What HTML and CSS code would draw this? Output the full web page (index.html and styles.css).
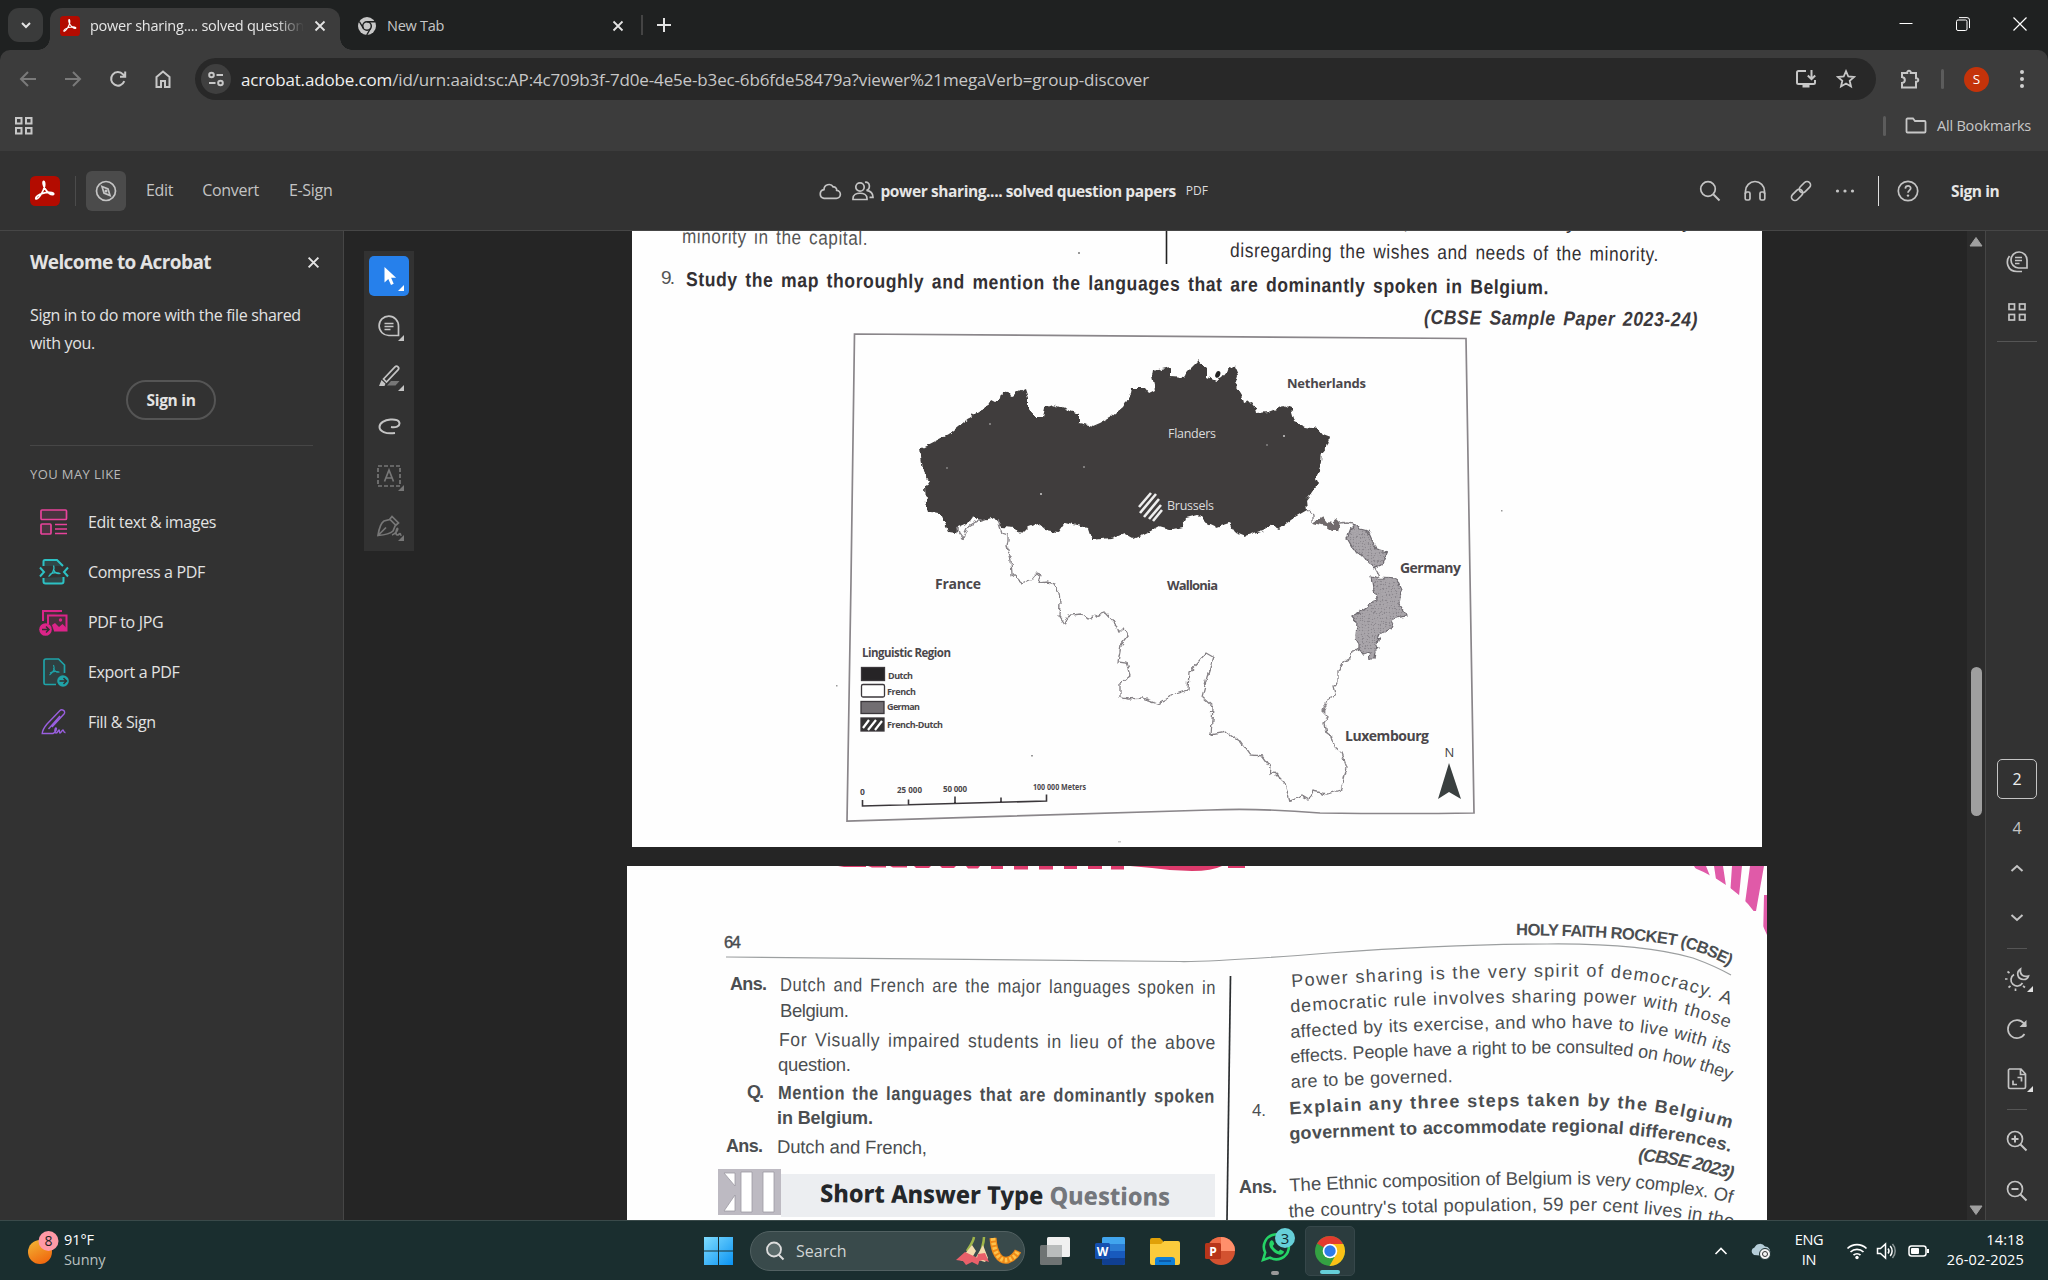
FILE: index.html
```html
<!DOCTYPE html>
<html lang="en">
<head>
<meta charset="utf-8">
<title>power sharing.... solved question papers</title>
<link rel="stylesheet" href="styles.css">
</head>
<body>
<svg class="defs" width="0" height="0" aria-hidden="true">
  <defs>
    <symbol id="acro" viewBox="0 0 20 20"><rect width="20" height="20" rx="3.6" fill="#b30b00"/><path d="M4.3 15.3c1.6-.4 4.8-4.900 5.400-8.500.3-2-.1-3.300-.6-3.200-.8.200-.3 3.200 1.300 5.400 1.600 2.200 3.600 3.600 4.900 3.400 1.200-.3.300-1.600-2.600-1.500-2.700.1-5.900 1-7.600 2.200-1.400 1-1.600 2.400-.8 2.200z" fill="none" stroke="#fff" stroke-width="1.150"/></symbol>
    <symbol id="corner" viewBox="0 0 6 6"><path d="M6 0v6H0z" fill="currentColor"/></symbol>
    <symbol id="x" viewBox="0 0 12 12"><path d="M1.500 1.500l9 9M10.500 1.500l-9 9" stroke="currentColor" stroke-width="1.800" fill="none"/></symbol>
  </defs>
</svg>

<header class="tabstrip">
  <button class="tab-search"><svg width="12" height="12" viewBox="0 0 12 12"><path d="M2 4l4 4 4-4" class="s2"/></svg></button>
  <div class="tab active">
    <svg width="20" height="20"><use href="#acro"/></svg>
    <span class="tab-title fade">power sharing.... solved question</span>
    <svg class="tab-x" width="12" height="12"><use href="#x"/></svg>
  </div>
  <div class="tab second">
    <svg width="18" height="18" viewBox="0 0 18 18"><circle cx="9" cy="9" r="9" fill="#c7c7c7"/><circle cx="9" cy="9" r="4.300" fill="none" stroke="#1f2121" stroke-width="1.500"/><path d="M9 4.700h8M5.300 11.200L1.300 4.500M12.700 11.200L8.700 18" stroke="#1f2121" stroke-width="1.400"/></svg>
    <span class="tab-title">New Tab</span>
    <svg class="tab-x" width="12" height="12"><use href="#x"/></svg>
  </div>
  <span class="tab-sep"></span>
  <svg class="newtab" width="14" height="14" viewBox="0 0 14 14"><path d="M7 0v14M0 7h14" class="s2"/></svg>
  <div class="window-buttons">
    <svg width="14" height="14" viewBox="0 0 14 14"><path d="M.5 6.500h13" stroke="#fff"/></svg>
    <svg width="14" height="14" viewBox="0 0 14 14" fill="none" stroke="#fff"><rect x=".5" y="3" width="10.500" height="10.500" rx="1.500"/><path d="M3 .6h8a2.500 2.500 0 0 1 2.500 2.500v8"/></svg>
    <svg width="14" height="14" viewBox="0 0 14 14"><path d="M.5.5l13 13M13.500.5l-13 13" stroke="#fff" stroke-width="1.200"/></svg>
  </div>
</header>

<div class="toolbar">
  <div class="nav">
    <svg class="dim" width="20" height="20" viewBox="0 0 20 20"><path d="M18 10H3M10 3l-7 7 7 7" class="s2"/></svg>
    <svg class="dim" width="20" height="20" viewBox="0 0 20 20"><path d="M2 10h15M10 3l7 7-7 7" class="s2"/></svg>
    <svg width="20" height="20" viewBox="0 0 20 20"><path d="M16.300 12.200A6.800 6.800 0 1 1 15 5.300l2 2M17.200 2.500v5.200H12" class="s2"/></svg>
    <svg width="20" height="20" viewBox="0 0 20 20"><path d="M3.500 8L10 2.500 16.500 8v10H12v-6H8v6H3.500z" class="s2"/></svg>
  </div>
  <div class="omnibox">
    <span class="site"><svg width="18" height="18" viewBox="0 0 18 18"><g class="s2"><circle cx="4.500" cy="5" r="2.300"/><path d="M9.500 5H16M2 13h6.500"/><circle cx="13.500" cy="13" r="2.300"/></g></svg></span>
    <span class="url"><b>acrobat.adobe.com</b>/id/urn:aaid:sc:AP:4c709b3f-7d0e-4e5e-b3ec-6b6fde58479a?viewer%21megaVerb=group-discover</span>
    <svg width="22" height="20" viewBox="0 0 22 20"><path d="M11 2H3.500A1.500 1.500 0 0 0 2 3.500v10A1.500 1.500 0 0 0 3.500 15h15a1.500 1.500 0 0 0 1.500-1.500V11M16.500 1v9M12.800 6.500l3.700 3.700 3.700-3.700" class="s2"/><path d="M7.500 15h7v3.500h-7z" fill="currentColor"/></svg>
    <svg class="star" width="20" height="20" viewBox="0 0 20 20"><path d="M10 2.200l2.300 5.300 5.800.5-4.400 3.800 1.300 5.700L10 14.500l-5 3 1.300-5.700L1.900 8l5.800-.5z" class="s2 thin"/></svg>
  </div>
  <svg class="ext" width="22" height="22" viewBox="0 0 22 22"><path d="M3 5h5.200c-.4-3 4-3 3.600 0H17v5.200c3-.4 3 4 0 3.600V19.500H3v-4.500c3.800-.5 3.800-5.500 0-6z" class="s2"/></svg>
  <span class="bar-sep"></span>
  <span class="avatar">S</span>
  <svg class="kebab" width="6" height="20" viewBox="0 0 6 20"><g fill="#d0d0d0"><circle cx="3" cy="3" r="2"/><circle cx="3" cy="10" r="2"/><circle cx="3" cy="17" r="2"/></g></svg>
</div>

<div class="bookmarks">
  <svg width="20" height="20" viewBox="0 0 20 20"><g class="s2"><rect x="2" y="2" width="5.500" height="5.500"/><rect x="12" y="2" width="5.500" height="5.500"/><rect x="2" y="12" width="5.500" height="5.500"/><rect x="12" y="12" width="5.500" height="5.500"/></g></svg>
  <span class="grow"></span>
  <span class="bar-sep"></span>
  <svg width="22" height="17" viewBox="0 0 22 17"><path d="M1.500 2.500a1 1 0 0 1 1-1H8l2 2.500h9.500a1 1 0 0 1 1 1v9.500a1 1 0 0 1-1 1h-17a1 1 0 0 1-1-1z" class="s2 thin"/></svg>
  <span class="all-bm">All Bookmarks</span>
</div>

<div class="acro-head">
  <svg width="30" height="30"><use href="#acro"/></svg>
  <span class="head-sep"></span>
  <span class="compass"><svg width="22" height="22" viewBox="0 0 22 22"><circle cx="11" cy="11" r="9.500" class="s1"/><path d="M7 6.500l6 2.500 2 6.500-6-2.500z" class="s1"/><circle cx="11" cy="11" r="1.500" fill="currentColor"/></svg></span>
  <nav><span>Edit</span><span>Convert</span><span>E-Sign</span></nav>
  <div class="doc-title">
    <svg width="24" height="20" viewBox="0 0 24 20"><path d="M6 17.300h12a4 4 0 0 0 .7-8 3 3 0 0 0-3.400-3.300 5 5 0 0 0-9.300 2.600A4.400 4.400 0 0 0 6 17.300z" class="s1"/></svg>
    <svg class="people" width="24" height="24" viewBox="0 0 24 24"><g class="s1"><circle cx="9" cy="8" r="4.200"/><path d="M2 20.500v-1c0-7 14-7 14 0v1zM14 3.300c5-1 6 6.500 1.500 8 4 .5 6.500 3 6.500 7H18.500"/></g></svg>
    <b>power sharing.... solved question papers</b><small>PDF</small>
  </div>
  <div class="head-right">
    <svg width="22" height="22" viewBox="0 0 22 22"><circle cx="9" cy="9" r="7.300" class="s1"/><path d="M14.500 14.500l6 6" class="s1 thick"/></svg>
    <svg width="24" height="22" viewBox="0 0 24 22"><g class="s1"><path d="M2.500 14V11a9.500 9.500 0 0 1 19 0v3"/><rect x="2.200" y="12" width="4.800" height="8" rx="1.500"/><rect x="17" y="12" width="4.800" height="8" rx="1.500"/></g></svg>
    <svg width="24" height="24" viewBox="0 0 24 24"><g class="s1" transform="rotate(-45 12 12)"><rect x="0" y="8.500" width="13" height="7" rx="3.500"/><rect x="11" y="8.500" width="13" height="7" rx="3.500"/></g></svg>
    <svg width="20" height="20" viewBox="0 0 20 20"><g fill="#c4c4c4"><circle cx="2.500" cy="10" r="1.600"/><circle cx="10" cy="10" r="1.600"/><circle cx="17.500" cy="10" r="1.600"/></g></svg>
    <i></i>
    <svg width="22" height="22" viewBox="0 0 22 22"><circle cx="11" cy="11" r="9.700" class="s1"/><path d="M8.300 8.600c.2-3.600 5.600-3.400 5.400-.2-.1 1.900-2.700 2-2.700 4.300" class="s1"/><circle cx="11" cy="15.600" r="1.200" fill="currentColor"/></svg>
    <b>Sign in</b>
  </div>
</div>

<main>
  <aside class="welcome">
    <h2>Welcome to Acrobat<svg width="13" height="13"><use href="#x"/></svg></h2>
    <p>Sign in to do more with the file shared with you.</p>
    <button class="signin">Sign in</button>
    <hr>
    <h3>YOU MAY LIKE</h3>
    <ul>
      <li><svg width="30" height="30" viewBox="0 0 30 30"><g fill="#e34399" fill-opacity=".13" stroke="#e8439b" stroke-width="1.700"><rect x="2" y="3" width="25.500" height="9.500" rx="1"/><rect x="2" y="17" width="10" height="10" rx="1"/></g><path d="M16 17.500h12M16 22h12M16 26.500h12" stroke="#e8439b" stroke-width="1.700"/></svg><span>Edit text &amp; images</span></li>
      <li><svg width="30" height="30" viewBox="0 0 30 30"><path d="M4.500 9V4.500a1.500 1.500 0 0 1 1.500-1.500h12l6 6M24.500 20v4.500a2 2 0 0 1-2 2H6.500a2 2 0 0 1-2-2V21" fill="#2dbdc0" fill-opacity=".16" stroke="#2dc1c4" stroke-width="2"/><path d="M1 10.500L5 15l-4 4.500M29 10.500L25 15l4 4.500" fill="none" stroke="#2dc1c4" stroke-width="2"/><path d="M14.500 8.500c2 4-2 9-5 11M14.500 12c1 4 4 5 7 4.500M10.500 17.500c3-2 6-2.500 10-1.500" fill="none" stroke="#2dc1c4" stroke-width="1.200"/></svg><span>Compress a PDF</span></li>
      <li><svg width="30" height="30" viewBox="0 0 30 30"><path d="M4 14V4h19M9 17V8.500h18.500v15H15" fill="#d6247f" fill-opacity=".13" stroke="#dc2489" stroke-width="2"/><circle cx="21.500" cy="13" r="1.700" fill="#dc2489"/><path d="M13 18l3-2 4 4 3.500-3 4 4v3H15z" fill="#dc2489"/><circle cx="6.500" cy="22.500" r="6.300" fill="#dc2489"/><path d="M3 22.500h6.500M7 19.500l3 3-3 3" fill="none" stroke="#323232" stroke-width="1.500"/></svg><span>PDF to JPG</span></li>
      <li><svg width="30" height="30" viewBox="0 0 30 30"><path d="M17 27.500H6.500a1.500 1.500 0 0 1-1.500-1.500V4a2 2 0 0 1 2-2h12.500l6 6v8" fill="#1fa3a8" fill-opacity=".13" stroke="#1fa3a8" stroke-width="1.700"/><path d="M14.500 8c2 4-1 8-4 10M14.500 11c1 3 3 5 6 4M11 16c3-2 6-2 9-1" fill="none" stroke="#1fa3a8" stroke-width="1.200"/><circle cx="24" cy="24" r="5.800" fill="#1fa3a8"/><path d="M20.500 24h6.500M24.500 21l3 3-3 3" fill="none" stroke="#323232" stroke-width="1.500"/></svg><span>Export a PDF</span></li>
      <li><svg width="30" height="30" viewBox="0 0 30 30"><path d="M8 17L21 3.500c2-2 6 .7 4.200 3.200L13 20M8 17c-2.500 3-4.500 6-4.800 9.500H14c3-1 4-5 3-5.500s-2 5 0 5 2-3 3-3 0 3 1 3 2-3 3-3 0 3 2.500 2.500M9.500 22L21 9" fill="none" stroke="#9a5fe0" stroke-width="1.400"/></svg><span>Fill &amp; Sign</span></li>
    </ul>
  </aside>

  <section class="viewer">
    <div class="tools">
      <span class="on"><svg width="24" height="24" viewBox="0 0 24 24"><path d="M7.500 3v15.500l3.800-3.600 2.700 6 2.700-1.200-2.600-5.900h5z" fill="#fff"/></svg><svg class="c"><use href="#corner"/></svg></span>
      <span><svg width="24" height="24" viewBox="0 0 24 24"><path d="M21.500 21.500H12A9.700 9.700 0 1 1 21.500 12zM7.500 9.500h9M7.500 12.500h9M7.500 15.500h6" class="s1"/></svg><svg class="c"><use href="#corner"/></svg></span>
      <span><svg width="24" height="24" viewBox="0 0 24 24"><path d="M6.500 15L18 2.800a2 2 0 0 1 3 3L9.500 18z" class="s1"/><path d="M2 22l2.500-6 4 3.800L7.500 22z" fill="#c4c4c4"/><path d="M10 21.500l4-4.500h8.500l-4 4.500z" fill="#777"/></svg><svg class="c"><use href="#corner"/></svg></span>
      <span><svg width="24" height="24" viewBox="0 0 24 24"><path d="M14 13c5 1 8.500-1 8.500-3.500 0-3-4-4.500-9-4-6 .5-11 3.500-11 7.500s6 7.500 15.500 6" class="s1 thick"/></svg></span>
      <span class="off"><svg width="26" height="24" viewBox="0 0 26 24"><rect x="2" y="2" width="22" height="20" class="s1" stroke-dasharray="4 2"/><path d="M8.500 17.500L13 6l4.500 11.500M10 14h6" class="s1"/></svg><svg class="c"><use href="#corner"/></svg></span>
      <span class="off"><svg width="26" height="24" viewBox="0 0 26 24"><path d="M2 21.500C3 15 4.500 9 8 7l6-1.500 5.500 5.500-2.500 6c-3 3-9 4-15 4.500zM2 21.500l8-8M13.500 5.500L16 2.500l6.500 6.500-3 2.500M16 21c4-1 6.500-6 5.500-6.500s-2.500 6.500-.5 6.500 2-1.500 3-1.500 0 2 1.500 1.500" class="s1"/></svg><svg class="c"><use href="#corner"/></svg></span>
    </div>

    <div class="pages">
      <svg class="page" width="1130" height="616" viewBox="632 231 1130 616">
        <defs>
          <filter id="jag" x="-5%" y="-5%" width="110%" height="110%"><feTurbulence type="fractalNoise" baseFrequency=".16" numOctaves="2" seed="4"/><feDisplacementMap in="SourceGraphic" scale="6" xChannelSelector="R" yChannelSelector="G"/></filter>
          <pattern id="dots" width="3" height="3" patternUnits="userSpaceOnUse"><rect width="3" height="3" fill="#a5a1a6"/><rect width="1" height="1" fill="#8d898f"/><rect x="1.500" y="1.500" width="1" height="1" fill="#b8b4b9"/></pattern>
        </defs>
        <g class="scan">
          <text class="w" transform="translate(682 243) rotate(.6)" textLength="186" lengthAdjust="spacingAndGlyphs" font-size="20" fill="#555">minority in the capital.</text>
          <text x="1403" y="229" font-size="20">,</text><text x="1566" y="229" font-size="20">y</text><text x="1654" y="228" font-size="20" textLength="38">, by</text>
          <text class="w" transform="translate(1230 257) rotate(.55)" textLength="429" lengthAdjust="spacingAndGlyphs" font-size="20">disregarding the wishes and needs of the minority.</text>
          <text x="661" y="284" font-size="19" textLength="14" fill="#555">9.</text>
          <text class="b w" transform="translate(686 286) rotate(.55)" textLength="863" lengthAdjust="spacingAndGlyphs" font-size="20">Study the map thoroughly and mention the languages that are dominantly spoken in Belgium.</text>
          <text class="b i w" transform="translate(1424 324) rotate(.5)" textLength="274" lengthAdjust="spacingAndGlyphs" font-size="20" fill="#3c393c">(CBSE Sample Paper 2023-24)</text>
        </g>
        <path d="M1166.500 231v33" stroke="#222" stroke-width="1.600"/>
        <path d="M854.500 334L1466 338.500 1474 813q-70 1-154 0-60-5-110-3L847 821l4-240z" fill="none" stroke="#8a868a" stroke-width="1.700"/>
        <g filter="url(#jag)">
          <path fill="#403e3d" d="M920 449L949 434 969 418 991 403 1001 398 1002 391 1008 392 1010 396 1025 389 1028 398 1028 408 1036 417 1043 417 1045 408 1053 405 1079 414 1079 423 1093 426 1100 423 1111 417 1123 407 1131 393 1132 388 1145 388 1149 393 1155 390 1152 377 1153 371 1171 367 1171 377 1183 378 1188 371 1198 361 1207 368 1207 377 1216 381 1222 378 1227 372 1229 366 1235 368 1238 375 1235 385 1241 395 1243 403 1251 401 1255 407 1256 413 1269 412 1277 409 1284 405 1291 408 1295 422 1306 427 1318 429 1322 434 1330 437 1327 447 1322 453 1320 468 1316 478 1318 482 1312 492 1306 500 1307 510 1295 517 1279 529 1271 525 1263 530 1245 536 1235 532 1229 523 1217 527 1204 521 1198 515 1186 518 1182 527 1169 530 1158 527 1147 533 1134 539 1123 533 1111 538 1092 540 1088 528 1065 522 1058 532 1045 530 1038 524 1029 527 1021 535 1015 528 1002 527 994 518 980 522 974 515 969 522 958 527 956 533 949 532 940 513 929 512 926 503 925 487 929 481 923 470z"/>
          <path fill="url(#dots)" stroke="#6e6a70" stroke-width="1.200" d="M1353 523L1360 529 1368 531 1376 549 1387 552 1382 564 1373 568 1365 557 1355 552 1347 538 1351 528zM1371 576L1380 578 1397 579 1402 590 1400 605 1407 616 1395 618 1390 629 1380 635 1377 642 1379 647 1375 651 1374 659 1370 659 1369 652 1363 654 1358 651 1358 643 1356 637 1357 622 1352 616 1362 610 1377 600 1373 588z"/>
          <path fill="#6f6b6c" d="M1313 523L1323 517 1327 522 1332 523 1337 519 1341 523 1339 531 1332 531 1325 526z"/>
          <g fill="none" stroke="#858185" stroke-width="1.300">
            <path d="M1307 510l6 5v8M1341 523l6-1 6 1M1375 568l5 9M956 528L963 538 968 527 978 521 986 519"/>
            <path d="M998 520L1002 533 1008 535 1008 541 1007 547 1011 560 1012 575 1023 583 1032 579 1036 574 1041 576 1039 583 1047 582 1054 584 1059 592 1060 603 1059 615 1065 624 1069 615 1082 614 1088 619 1105 613 1117 626 1119 633 1124 628 1129 635 1121 645 1118 662 1126 663 1130 675 1120 684 1120 697 1127 699 1143 698 1158 703 1173 695 1188 690 1189 672 1206 653 1213 657 1210 668 1207 677 1202 697 1213 707 1211 735 1227 732 1240 741 1250 755 1263 756 1271 767 1270 774 1274 772 1285 783 1290 801 1302 796 1309 800 1313 791 1327 794 1340 790 1343 783 1347 767 1342 753 1335 747 1332 737 1326 733 1324 723 1328 716 1323 711 1328 698 1335 695 1333 687 1338 682 1338 672 1343 662 1350 658 1352 650 1358 649"/>
          </g>
        </g>
        <ellipse cx="1218" cy="374.500" rx="2.300" ry="3.500" fill="#222" transform="rotate(25 1218 374)"/>
        <g fill="#ccc"><circle cx="1041" cy="494" r="1"/><circle cx="1084" cy="467" r=".8"/><circle cx="990" cy="424" r=".8"/><circle cx="1284" cy="436" r="1"/><circle cx="1267" cy="445" r=".7"/><circle cx="947" cy="468" r=".7"/></g>
        <path d="M1139 507l12-14M1140 513l16-19M1144 517l15-18M1149 519l12-14M1153 521l9-11" stroke="#eee" stroke-width="2.600"/>
        <g class="label">
          <g fill="#dcdcdc"><text x="1168" y="437.500" textLength="48" font-size="12.500">Flanders</text><text x="1167" y="509.500" textLength="47" font-size="12.500">Brussels</text></g>
          <g class="b" fill="#4b474b"><text x="1287" y="387.500" textLength="79" font-size="13">Netherlands</text>
          <text x="935" y="588.500" textLength="46" font-size="14">France</text><text x="1167" y="589.500" textLength="51" font-size="13">Wallonia</text>
          <text x="1400" y="573" textLength="61" font-size="14">Germany</text><text x="1345" y="741" textLength="84" font-size="14">Luxembourg</text>
          <text x="862" y="656.500" textLength="89" font-size="11.500">Linguistic Region</text>
          <text x="888" y="678.500" textLength="25" font-size="9">Dutch</text><text x="887" y="695" textLength="29" font-size="9">French</text><text x="887" y="710" textLength="33" font-size="9">German</text><text x="887" y="728" textLength="56" font-size="9">French-Dutch</text>
          <text x="860" y="795" font-size="8.500">0</text><text x="897" y="793" textLength="25" font-size="8">25 000</text><text x="943" y="792" textLength="24" font-size="8">50 000</text><text x="1033" y="790" textLength="53" lengthAdjust="spacingAndGlyphs" font-size="8">100 000 Meters</text></g>
          <text x="1444.500" y="757" font-size="13" fill="#444">N</text>
        </g>
        <g stroke="#3b373b" stroke-width="1.300"><rect x="861.500" y="667.500" width="23" height="13" fill="#262426"/><rect x="861.500" y="684.500" width="23" height="12.500" rx="1.500" fill="#fff"/><rect x="861" y="701.500" width="23" height="12" fill="#726e72"/><rect x="861" y="718" width="23" height="13" fill="#333"/></g>
        <path d="M863 728l6-8M868 730l8-10M875 730l7-9" stroke="#fff" stroke-width="2.200"/>
        <path d="M862.500 800v6L1046.500 801v-6.500M908.500 804.500v-5M955 803v-6.500M1001 802v-4.500" fill="none" stroke="#3b373b" stroke-width="1.600"/>
        <path d="M1449 763l12 36-12-7-11 7z" fill="#3a4040"/>
        <g fill="#999"><rect x="1078" y="252" width="2" height="2"/><rect x="1501" y="510" width="1.500" height="1.500"/><rect x="1031" y="755" width="2" height="1.500"/><rect x="1118" y="841" width="3" height="1.500" fill="#ccc"/><rect x="836" y="685" width="1.500" height="1.500"/></g>
      </svg>

      <svg class="page" width="1140" height="354" viewBox="627 866 1140 354">
        <defs>
          <path id="h" d="M1516 935C1580 936 1640 938 1682 947 1705 953 1722 962 1745 974"/>
          <path id="r1" d="M1292 987C1370 981 1480 977 1583 976.500 1650 977 1700 992 1745 1011"/>
          <path id="r2" d="M1291 1012.500C1370 1006 1480 1002.500 1583 1002 1655 1003 1700 1017 1745 1034"/>
          <path id="r3" d="M1291 1038C1370 1032 1480 1028 1583 1028 1655 1030 1700 1043 1745 1060"/>
          <path id="r4" d="M1291 1063C1370 1057 1480 1053.500 1583 1053 1655 1055 1700 1068 1745 1086"/>
          <path id="r5" d="M1291 1088C1350 1085 1400 1082.500 1470 1082"/>
          <path id="r6" d="M1290 1114.500C1370 1109 1480 1106 1583 1106 1655 1109 1700 1118 1745 1133"/>
          <path id="r7" d="M1290 1140C1370 1135 1480 1132 1583 1132 1655 1135 1700 1143 1745 1156"/>
          <path id="r8" d="M1638 1161C1670 1163 1700 1169 1745 1183"/>
          <path id="r9" d="M1290 1191.500C1370 1187 1480 1184.500 1583 1184.500 1655 1188 1700 1194 1745 1207"/>
          <path id="r10" d="M1289 1217.500C1370 1213 1480 1210.500 1583 1210.500 1655 1213 1700 1219 1745 1231"/>
          <clipPath id="cornerclip"><path d="M1690 866Q1750 890 1767 935V866z"/></clipPath>
        </defs>
        <path d="M838 866h28v1h-22zM868 866h18v1.500h-14zM890 866h17v1.500h-14zM914 866h17l-2 2h-13zM940 866h16l-2 2h-12zM966 866h14l-2 2.500h-10zM991 866h12v3h-12zM1014 866h14v3.500h-14zM1039 866h14v3.500h-14zM1064 866h13v3h-13zM1088 866h14v3h-14zM1111 866h13v3.500h-13zM1130 866h92q-10 5-30 5t-40-3zM1228 866h17v2h-17z" fill="#dd3a6c"/>
        <g clip-path="url(#cornerclip)" fill="#e05aa8"><path d="M1694 866h12l4 10h-10zM1714 866h9l3 20h-9zM1732 866h10l-3 30h-9zM1750 866h14l-8 45h-12zM1764 895h5v45h-6z"/></g>
        <path d="M726 957Q950 960 1180 961.500 1215 962 1329 953 1450 944 1547 944 1640 943 1693 958 1715 966 1731 975" fill="none" stroke="#9c9fa0" stroke-width="1.200"/>
        <path d="M1230.500 976L1227 1220" stroke="#2b2e30" stroke-width="1.700"/>
        <rect x="781" y="1174" width="434" height="43" fill="#eceef1"/><rect x="718" y="1169" width="63" height="46" fill="#bdbac2"/>
        <path d="M724 1173h11v13zM724 1211h11v-16zM741 1172h11v40h-11zM763 1172h11v40h-11z" fill="#fff" stroke="#9c99a2" stroke-width=".8"/>
        <g class="scan two">
          <text x="724" y="948" font-size="16.500" textLength="17" class="m">64</text>
          <text class="b" x="730" y="990" textLength="37" font-size="18">Ans.</text><text class="w" transform="translate(780 991) rotate(.4)" textLength="436" lengthAdjust="spacingAndGlyphs" font-size="19">Dutch and French are the major languages spoken in</text>
          <text x="780" y="1017" textLength="69" font-size="18.500">Belgium.</text>
          <text class="w" transform="translate(779 1046) rotate(.4)" textLength="437" lengthAdjust="spacingAndGlyphs" font-size="19">For Visually impaired students in lieu of the above</text>
          <text x="778" y="1071" textLength="73" font-size="18.500">question.</text>
          <text class="b" x="747" y="1098" textLength="17" font-size="18">Q.</text><text class="b w" transform="translate(778 1099) rotate(.5)" textLength="437" lengthAdjust="spacingAndGlyphs" font-size="19">Mention the languages that are dominantly spoken</text>
          <text class="b" x="777" y="1124" textLength="96" font-size="18">in Belgium.</text>
          <text class="b" x="726" y="1152" textLength="37" font-size="18">Ans.</text><text transform="translate(777 1153) rotate(.4)" textLength="150" font-size="18.500">Dutch and French,</text>
          <text class="b" textLength="218" font-size="16.500"><textPath href="#h">HOLY FAITH ROCKET (CBSE)</textPath></text>
          <text textLength="441" font-size="18"><textPath href="#r1">Power sharing is the very spirit of democracy. A</textPath></text>
          <text textLength="441" font-size="18"><textPath href="#r2">democratic rule involves sharing power with those</textPath></text>
          <text textLength="441" font-size="18"><textPath href="#r3">affected by its exercise, and who have to live with its</textPath></text>
          <text textLength="443" font-size="18"><textPath href="#r4">effects. People have a right to be consulted on how they</textPath></text>
          <text textLength="162" font-size="18"><textPath href="#r5">are to be governed.</textPath></text>
          <text x="1252" y="1116" textLength="14" font-size="17">4.</text>
          <text class="b" textLength="443" font-size="18"><textPath href="#r6">Explain any three steps taken by the Belgium</textPath></text>
          <text class="b" textLength="442" font-size="18"><textPath href="#r7">government to accommodate regional differences.</textPath></text>
          <text class="b i" textLength="96" font-size="18"><textPath href="#r8">(CBSE 2023)</textPath></text>
          <text class="b" x="1239" y="1193" textLength="38" font-size="18">Ans.</text>
          <text textLength="443" font-size="18.500"><textPath href="#r9">The Ethnic composition of Belgium is very complex. Of</textPath></text>
          <text textLength="445" font-size="18.500"><textPath href="#r10">the country's total population, 59 per cent lives in the</textPath></text>
        </g>
        <text class="short" transform="translate(820 1202) rotate(.6)" textLength="350" lengthAdjust="spacingAndGlyphs" font-size="24.500">Short Answer Type <tspan fill="#74777c">Questions</tspan></text>
      </svg>
    </div>
    <div class="scroll"><svg width="14" height="10" viewBox="0 0 14 10"><path d="M7 .5l6 8.500H1z" fill="#9f9f9f" stroke="#9f9f9f" stroke-linejoin="round"/></svg><i></i><svg width="14" height="10" viewBox="0 0 14 10"><path d="M7 9.500L1 1h12z" fill="#9f9f9f" stroke="#9f9f9f" stroke-linejoin="round"/></svg></div>
  </section>

  <aside class="rail">
    <span class="cell"><svg width="24" height="24" viewBox="0 0 24 24"><path d="M22 18h-8.500a8 8 0 1 1 8.500-8zM10 7.500h7M10 10.500h7M10 13.500h4.500M4.500 6C.5 11 2 21.500 12 21.500h5" class="s1"/></svg></span>
    <span class="cell"><svg width="20" height="20" viewBox="0 0 20 20"><g class="s1"><rect x="2" y="2" width="5.500" height="5.500"/><rect x="12.500" y="2" width="5.500" height="5.500"/><rect x="2" y="12.500" width="5.500" height="5.500"/><rect x="12.500" y="12.500" width="5.500" height="5.500"/></g></svg></span>
    <hr class="wide">
    <span class="grow"></span>
    <span class="pg">2</span>
    <span class="total">4</span>
    <span class="cell"><svg width="14" height="10" viewBox="0 0 14 10"><path d="M1.500 8L7 3l5.500 5" class="s2"/></svg></span>
    <span class="cell"><svg width="14" height="10" viewBox="0 0 14 10"><path d="M1.500 2L7 7l5.500-5" class="s2"/></svg></span>
    <hr>
    <span class="cell"><svg width="26" height="24" viewBox="0 0 26 24"><path d="M10 7.500a6.200 6.200 0 1 0 8.500 8.500M16.500 2c-4.500 3-3.500 10 3 10.500 2.500 0 4.500-1.500 5-3.500-6 1.500-9-2-8-7zM1 12h2.500M3.500 4.500L5.500 6M11.500 21.500V24M4.500 20.500L6.500 19M19 19l2 1.500" class="s1"/></svg><svg class="c"><use href="#corner"/></svg></span>
    <span class="cell"><svg width="24" height="24" viewBox="0 0 24 24"><path d="M19.500 17A9 9 0 1 1 19 6.500l2 2.500" class="s1"/><path d="M21.500 3v7h-7z" fill="#c4c4c4"/></svg></span>
    <span class="cell"><svg width="24" height="24" viewBox="0 0 24 24"><path d="M4.500 2H16l4.500 5v13a1.500 1.500 0 0 1-1.500 1.500H5A1.500 1.500 0 0 1 3.500 20V3zM15.500 2v5.500h5M12.500 10.500h4v4M8 13.500v4h4" class="s1"/></svg><svg class="c"><use href="#corner"/></svg></span>
    <hr class="last">
    <span class="cell"><svg width="22" height="22" viewBox="0 0 22 22"><path d="M14.500 14.500l6 6M5.500 9h7M9 5.500v7" class="s1 thick"/><circle cx="9" cy="9" r="7.500" class="s1"/></svg></span>
    <span class="cell"><svg width="22" height="22" viewBox="0 0 22 22"><path d="M14.500 14.500l6 6M5.500 9h7" class="s1 thick"/><circle cx="9" cy="9" r="7.500" class="s1"/></svg></span>
  </aside>
</main>

<footer class="taskbar">
  <div class="weather">
    <svg width="34" height="40" viewBox="0 0 34 40"><defs><linearGradient id="sun" x1=".2" y1="0" x2=".7" y2="1"><stop offset="0" stop-color="#f2b233"/><stop offset="1" stop-color="#f0650d"/></linearGradient></defs><circle cx="13" cy="24" r="12" fill="url(#sun)"/><circle cx="21.500" cy="13" r="10" fill="#ff99a6"/><text x="21.500" y="18" text-anchor="middle" font-size="14" fill="#222">8</text></svg>
    <p>91°F<span>Sunny</span></p>
  </div>
  <div class="apps">
    <svg class="win" width="30" height="30" viewBox="0 0 30 30"><defs><linearGradient id="wl" x2="1" y2="1"><stop offset="0" stop-color="#7fdcff"/><stop offset="1" stop-color="#0a93f2"/></linearGradient></defs><path d="M0 1h14v13.500H0zM15 1h14v13.500H15zM0 15.500h14V29H0zM15 15.500h14V29H15z" fill="url(#wl)"/></svg>
    <div class="search"><svg width="20" height="20" viewBox="0 0 20 20"><circle cx="9" cy="8.500" r="7" fill="#5a6a6a" stroke="#ddd" stroke-width="1.800"/><path d="M13.500 13.500l5 5" stroke="#ddd" stroke-width="2"/></svg><span>Search</span>
      <svg width="66" height="32" viewBox="0 0 66 32"><path d="M18 2c-1 6-5 10-7 14M28 2c0 6-2 10-3 15" stroke="#9fb54a" stroke-width="2.500" fill="none"/><path d="M16 10l-12 15 9 3 7-12zM27 10l-8 14 10 3 3-4z" fill="#f3dcae"/><path d="M9 17L0 25l7 1 3 4 6-3 6 3 2-6zM22 19l-2 8 7-2 6 2-4-9z" fill="#e9606a"/><path d="M37 3c1 14 6 24 15 22 6-2 8-5 10-9" fill="none" stroke="#f08a18" stroke-width="7"/><path d="M37 3c1 14 6 24 15 22 6-2 8-5 10-9" fill="none" stroke="#ffc24a" stroke-width="4.500" stroke-dasharray="2.500 2"/></svg></div>
    <svg width="32" height="32" viewBox="0 0 32 32"><rect x="1" y="10" width="22" height="20" rx="1.500" fill="#6f7474"/><rect x="8" y="2" width="23" height="20" rx="1.500" fill="#f0f0f0"/><rect x="8" y="10" width="15" height="12" fill="#b9bcbc"/></svg>
    <svg width="32" height="32" viewBox="0 0 32 32"><rect x="8" y="2" width="23" height="28" rx="2" fill="#2b7cd3"/><path d="M8 9V4a2 2 0 0 1 2-2h19a2 2 0 0 1 2 2v5z" fill="#41a5ee"/><path d="M8 16h23v7H8z" fill="#185abd"/><path d="M8 23h23v5a2 2 0 0 1-2 2H10a2 2 0 0 1-2-2z" fill="#103f91"/><rect x="1" y="8" width="15" height="16" rx="1.500" fill="#1550b0"/><text x="8.500" y="20.500" text-anchor="middle" font-size="12" font-weight="700" fill="#fff">W</text></svg>
    <svg width="32" height="32" viewBox="0 0 32 32"><path d="M1 5a2 2 0 0 1 2-2h8l3 3v6H1z" fill="#e0a008"/><path d="M1 9h11l3-3h14a2 2 0 0 1 2 2v20a2 2 0 0 1-2 2H3a2 2 0 0 1-2-2z" fill="#fccb3c"/><path d="M6 30v-5a3 3 0 0 1 3-3h14a3 3 0 0 1 3 3v5z" fill="#1080d8"/><path d="M10 26h12" stroke="#0b4f9c" stroke-width="1.500"/></svg>
    <svg width="32" height="32" viewBox="0 0 32 32"><circle cx="17" cy="16" r="14" fill="#d35230"/><path d="M17 2a14 14 0 0 1 14 14H17z" fill="#ff8f6b"/><path d="M17 2v14H3A14 14 0 0 1 17 2z" fill="#ed6c47"/><rect x="1" y="8" width="16" height="16" rx="1.500" fill="#b7351a"/><text x="9" y="20.500" text-anchor="middle" font-size="12" font-weight="700" fill="#fff">P</text></svg>
    <span class="app wa"><svg width="38" height="38" viewBox="0 0 38 38"><path d="M6 32l2.200-7.500A12.500 12.500 0 1 1 13 29.600z" fill="none" stroke="#25d366" stroke-width="2.600"/><path d="M14 12.500c2-1.500 3 2.500 3.300 3.500l-1.500 2c1.200 2.500 3 4 5.700 5.200l1.800-1.700 3.500 1.800c.5 2-2 3.700-4 3.500-5-.7-10-6-10.500-10-.1-1.700.5-3.200 1.700-4.300z" fill="#25d366"/><circle cx="28" cy="10" r="10" fill="#66cfd8"/><text x="28" y="15.500" text-anchor="middle" font-size="15" fill="#10292c">3</text></svg></span>
    <span class="app chrome"><svg width="32" height="32" viewBox="0 0 32 32"><circle cx="16" cy="16" r="15" fill="#34a142"/><path d="M16 16L3 8.500A15 15 0 0 1 29 8.500z" fill="#e33b2e"/><path d="M16 9h13.300A15 15 0 0 1 15.500 31L22 19.500z" fill="#fbc116"/><circle cx="16" cy="16" r="7.300" fill="#fff"/><circle cx="16" cy="16" r="5.700" fill="#2f7be8"/></svg></span>
  </div>
  <div class="tray">
    <svg width="14" height="10" viewBox="0 0 14 10"><path d="M1.500 8L7 2.500 12.500 8" fill="none" stroke="#fff" stroke-width="1.600"/></svg>
    <svg class="od" width="22" height="20" viewBox="0 0 22 20"><path d="M4 14a4 4 0 0 1 .5-7.500 6 6 0 0 1 10.500-1 5 5 0 0 1 4.500 7.500L16 15z" fill="#b5cdd8"/><circle cx="15" cy="13" r="5.500" fill="#f3f3f3" stroke="#1a2e2f"/><path d="M12.500 13a2.500 2.500 0 0 1 5 0M17.500 13a2.500 2.500 0 0 1-5 0" stroke="#333" fill="none"/></svg>
    <p class="lang">ENG<br>IN</p>
    <svg class="wifi" width="22" height="18" viewBox="0 0 22 18"><g fill="none" stroke="#fff" stroke-width="1.700"><path d="M1.500 6.500a13.500 13.500 0 0 1 19 0M4.500 10a9.300 9.300 0 0 1 13 0M7.500 13.200a5 5 0 0 1 7 0"/></g><circle cx="11" cy="15.500" r="1.700" fill="#fff"/></svg>
    <svg class="spk" width="20" height="18" viewBox="0 0 20 18"><g fill="none" stroke="#fff" stroke-width="1.500"><path d="M1.500 6.500v5h3L9.500 16V2L4.500 6.500z"/><path d="M12 6.500a4 4 0 0 1 0 5M14.200 4a7.500 7.500 0 0 1 0 10" /><path d="M16.500 2a10.500 10.500 0 0 1 0 14" opacity=".5"/></g></svg>
    <svg class="bat" width="22" height="16" viewBox="0 0 22 16"><rect x="1" y="3" width="17" height="10" rx="2.500" fill="none" stroke="#fff" stroke-width="1.500"/><rect x="3" y="5" width="8" height="6" rx="1" fill="#fff"/><path d="M20 6v4" stroke="#fff" stroke-width="2"/></svg>
    <p class="clock">14:18<br>26-02-2025</p>
  </div>
</footer>
</body>
</html>
```
FILE: styles.css
```css
* { box-sizing: border-box; }
body { margin: 0; width: 2048px; height: 1280px; overflow: hidden; display: flex; flex-direction: column; background: #252525; color: #e3e3e3; font-family: "Open Sans", "Noto Sans", sans-serif; font-size: 15px; }
svg { display: block; flex: none; }
.defs { position: absolute; }
button { font: inherit; color: inherit; border: 0; background: none; padding: 0; }
p, h2, h3, ul { margin: 0; padding: 0; }
.s1 { fill: none; stroke: #c4c4c4; stroke-width: 1.7; }
.s2 { fill: none; stroke: currentColor; stroke-width: 2; }
.thin { stroke-width: 1.8; }
.thick { stroke-width: 2; }
.grow { flex: 1; }

.tabstrip { height: 50px; background: #1f2121; display: flex; align-items: flex-end; flex: none; }
.tab-search { width: 35px; height: 34px; margin: 0 7px 8px 8px; border-radius: 11px; background: #3a3b3b; display: flex; align-items: center; justify-content: center; }
.tab { height: 42px; width: 290px; padding: 0 14px 6px 18px; display: flex; align-items: center; gap: 11px; border-radius: 12px 12px 0 0; color: #c7c7c7; position: relative; }
.tab.second { width: 298px; }
.tab.active { background: #3c3c3c; color: #e6e6e6; padding-left: 10px; gap: 10px; }
.tab.active::before, .tab.active::after { content: ""; position: absolute; bottom: 0; width: 12px; height: 12px; }
.tab.active::before { left: -12px; background: radial-gradient(circle at 0 0, transparent 11.5px, #3c3c3c 12px); }
.tab.active::after { right: -12px; background: radial-gradient(circle at 100% 0, transparent 11.5px, #3c3c3c 12px); }
.tab-title { flex: 1; white-space: nowrap; overflow: hidden; font-size: 14.5px; letter-spacing: -.25px; position: relative; top: -1px; }
.fade { mask-image: linear-gradient(90deg, #000 87%, transparent); }
.tab-x { color: #e3e3e3; }
.tab-sep { width: 2px; height: 20px; background: #444; margin: 0 14px 15px 3px; }
.newtab { margin-bottom: 18px; }
.window-buttons { display: flex; gap: 43px; margin: 0 21px 19px auto; }

.toolbar { height: 58px; flex: none; background: #3c3c3c; display: flex; align-items: center; border-radius: 10px 10px 0 0; box-shadow: 0 0 0 12px #1f2121; clip-path: inset(0); color: #c7c7c7; }
.nav { display: flex; gap: 25px; padding-left: 18px; width: 195px; }
.dim { color: #7a7a7a; }
.omnibox { width: 1681px; height: 42px; border-radius: 21px; background: #282828; display: flex; align-items: center; padding: 0 20px 0 6px; }
.site { width: 30px; height: 30px; border-radius: 50%; background: #3f3f3f; display: flex; align-items: center; justify-content: center; margin-right: 10px; }
.url { flex: 1; font-size: 17px; color: #c7c7c7; letter-spacing: -.15px; white-space: nowrap; }
.url b { font-weight: 400; color: #f0f0f0; }
.star { margin-left: 19px; }
.ext { margin-left: 23px; }
.bar-sep { width: 3px; height: 20px; border-radius: 2px; background: #5c5c5c; }
.toolbar .bar-sep { margin: 0 20px 0 20px; }
.avatar { width: 25px; height: 25px; border-radius: 50%; background: #c4330a; color: #fff; display: flex; align-items: center; justify-content: center; font-size: 13.5px; }
.kebab { margin-left: 30px; }
.bookmarks { height: 43px; flex: none; background: #3c3c3c; display: flex; align-items: center; padding: 0 17px 8px 14px; color: #c7c7c7; }
.bookmarks .bar-sep { margin-right: 19px; }
.all-bm { margin-left: 10px; font-size: 14.5px; letter-spacing: -.2px; width: 94px; white-space: nowrap; }

.acro-head { height: 80px; flex: none; background: #323232; border-bottom: 1px solid #464646; display: flex; align-items: center; padding-left: 30px; position: relative; color: #c4c4c4; }
.head-sep { width: 1px; height: 30px; background: #4b4b4b; margin: 0 10px 0 15px; }
.compass { width: 40px; height: 40px; border-radius: 6px; background: #4b4b4b; display: flex; align-items: center; justify-content: center; }
nav { display: flex; gap: 29px; margin-left: 20px; font-size: 16px; letter-spacing: -.3px; padding-bottom: 1px; }
nav span:last-child { margin-left: 1px; }
.doc-title { display: flex; align-items: center; margin-left: 486px; color: #e6e6e6; font-size: 15.5px; white-space: nowrap; }
.doc-title b { margin-left: 5px; letter-spacing: -.4px; }
.doc-title small { font-size: 12px; margin-left: 10px; color: #ddd; }
.people { margin-left: 9px; }
.head-right { display: flex; align-items: center; margin-left: auto; width: 349px; }
.head-right svg:nth-child(n+2) { margin-left: 22px; }
.head-right i { width: 1px; height: 30px; background: #e0e0e0; margin-left: 23px; }
.head-right svg:nth-child(6) { margin-left: 18px; }
.head-right b { margin-left: 32px; font-size: 15.5px; letter-spacing: -.4px; color: #e6e6e6; }

main { height: 989px; flex: none; display: flex; }
.welcome { width: 344px; flex: none; background: #323232; border-right: 1px solid #464646; padding: 16px 30px; color: #e3e3e3; }
h2 { font-size: 19px; line-height: 30px; letter-spacing: -.6px; display: flex; align-items: center; justify-content: space-between; }
h2 svg { margin-right: -7px; }
.welcome p { margin-top: 24px; font-size: 16px; line-height: 28px; letter-spacing: -.33px; width: 276px; }
.signin { display: block; width: 90px; height: 40px; margin: 23px 0 0 96px; border: 2px solid #555; border-radius: 20px; font-weight: 700; font-size: 15.5px; letter-spacing: -.3px; line-height: 34px; }
hr { border: 0; height: 1px; background: #464646; margin: 25px 0 0; flex: none; }
h3 { font-weight: 400; font-size: 13px; line-height: 20px; letter-spacing: .4px; color: #b9b9b9; margin-top: 18px; }
ul { list-style: none; margin-top: 13px; }
li { height: 50px; display: flex; align-items: center; padding-left: 9px; gap: 19px; font-size: 16px; letter-spacing: -.35px; }

.viewer { width: 1642px; flex: none; display: flex; background: #252525; border-right: 1px solid #464646; }
.tools { width: 50px; height: 300px; margin: 20px 0 0 20px; background: #323232; padding: 5px; display: flex; flex-direction: column; gap: 10px; flex: none; }
.tools span { width: 40px; height: 40px; border-radius: 5px; display: flex; align-items: center; justify-content: center; position: relative; color: #c4c4c4; }
.tools .on { background: #2680eb; color: #fff; }
.tools .off { color: #777; }
.tools .off .s1 { stroke: #777; }
svg.c { position: absolute; right: 5px; bottom: 5px; width: 6px; height: 6px; color: inherit; }
.pages { margin-left: 213px; display: flex; flex-direction: column; align-items: center; gap: 19px; }
.page { background: #fefefe; }
.scroll { width: 18px; margin-left: auto; background: #2c2c2c; display: flex; flex-direction: column; align-items: center; padding: 6px 0 5px; }
.scroll i { width: 11px; height: 149px; margin-top: 420px; margin-bottom: auto; border-radius: 6px; background: #9f9f9f; }

.scan { font-family: "Liberation Sans", sans-serif; fill: #333033; }
.two { fill: #4b4e51; }
.w { letter-spacing: .7px; word-spacing: 2.5px; }
.label { font-family: "Open Sans", "Noto Sans", sans-serif; }
.b { font-weight: 700; }
.m { stroke: #45484b; stroke-width: .4; }
.i { font-style: italic; }
.short { font-family: "Noto Sans", sans-serif; font-weight: 800; fill: #24272a; }

.rail { width: 62px; flex: none; background: #323232; display: flex; flex-direction: column; align-items: center; padding: 6px 0 4px; color: #c4c4c4; }
.cell { width: 50px; height: 50px; flex: none; display: flex; align-items: center; justify-content: center; position: relative; }
.cell .c { right: 9px; bottom: 12px; color: #e0e0e0; }
.rail hr { width: 20px; margin: 5px 0; background: #555; }
.rail .wide { width: 40px; margin-top: 4px; }
.rail .last { margin-bottom: 6px; }
.pg { width: 40px; height: 40px; border: 1px solid #c4c4c4; border-radius: 5px; display: flex; align-items: center; justify-content: center; color: #eee; font-size: 16px; padding-bottom: 1px; }
.total { height: 44px; line-height: 58px; font-size: 16px; }

.taskbar { height: 60px; flex: none; background: #1a2e2f; border-top: 1px solid #3a4a4a; display: flex; align-items: center; }
.weather { display: flex; align-items: center; padding-left: 27px; width: 704px; gap: 3px; }
.weather svg { margin-top: -5px; }
.weather p { font-size: 14.5px; line-height: 20px; letter-spacing: -.1px; color: #fff; margin-top: -2px; }
.weather span { display: block; color: #b9c0c0; }
.apps { display: flex; align-items: center; }
.win { margin-right: 16px; }
.search { width: 275px; height: 40px; border-radius: 20px; background: #394a4b; border: 1px solid #526162; display: flex; align-items: center; padding-left: 14px; margin-right: 14px; }
.search span { margin-left: 11px; width: 160px; font-size: 16px; color: #d0d5d5; }
.apps > svg:nth-of-type(n+2) { margin-right: 23px; }
.app { width: 50px; height: 50px; border-radius: 5px; display: flex; align-items: center; justify-content: center; position: relative; }
.app::after { content: ""; position: absolute; bottom: 1px; height: 4px; border-radius: 2px; width: 8px; background: #999; }
.wa { margin-left: -9px; margin-right: 5px; }
.wa svg { margin: -8px 0 0 2px; }
.chrome { background: #2b3c3e; border: 1px solid #36474a; }
.chrome::after { width: 20px; background: #66cfd8; }
.tray { margin-left: auto; display: flex; align-items: center; padding-right: 24px; color: #fff; font-size: 14.5px; line-height: 20px; letter-spacing: -.3px; }
.tray p { margin-top: -2px; }
.od { margin-left: 22px; }
.tray .lang { text-align: center; margin-left: 22px; margin-right: 22px; width: 30px; }
.spk { margin-left: 8px; }
.bat { margin-left: 12px; }
.clock { text-align: right; margin-left: 14px; width: 80px; white-space: nowrap; letter-spacing: .15px; }
```
